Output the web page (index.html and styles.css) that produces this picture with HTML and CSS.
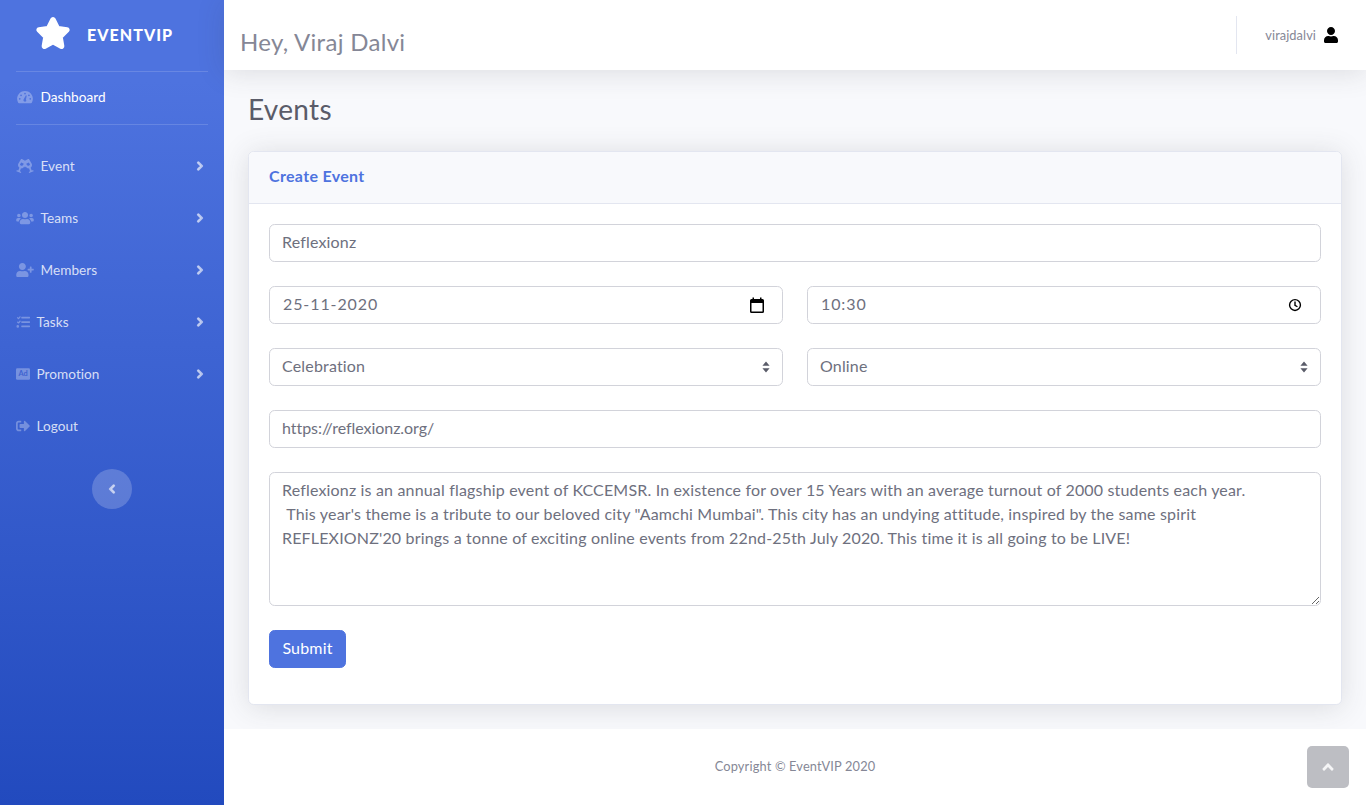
FILE: index.html
```html
<!DOCTYPE html>
<html lang="en">
<head>
<meta charset="utf-8">
<title>Create Event - EventVIP</title>
<link rel="stylesheet" href="styles.css">
</head>
<body>
<aside class="sidebar">
  <a class="brand" href="#">
    <svg class="brand-star" viewBox="0 0 576 512"><path d="M259.3 17.8L194 150.2 47.9 171.5c-26.2 3.8-36.7 36.1-17.7 54.6l105.7 103-25 145.5c-4.5 26.3 23.2 46 46.4 33.7L288 439.6l130.7 68.7c23.2 12.2 50.9-7.4 46.4-33.7l-25-145.5 105.7-103c19-18.5 8.5-50.8-17.7-54.6L382 150.2 316.7 17.8c-11.7-23.6-45.6-23.9-57.4 0z"/></svg>
    <span class="brand-text">EVENTVIP</span>
  </a>
  <hr class="side-rule">
  <a class="nav-item nav-active" href="#">
    <svg class="nav-icon" viewBox="0 0 576 512"><path fill-rule="evenodd" d="M288 32C129 32 0 161 0 320c0 53 14 102 39 144 6 10 16 16 28 16h442c12 0 22-6 28-16 25-42 39-91 39-144C576 161 447 32 288 32zm0 64a32 32 0 1 1 0 64 32 32 0 0 1 0-64zM96 352a32 32 0 1 1 0-64 32 32 0 0 1 0 64zm48-128a32 32 0 1 1 0-64 32 32 0 0 1 0 64zm186 190a64 64 0 0 1-84 0c-18-17-22-44-10-65L316 205c5-8 15-11 23-7s12 13 9 22l-25 124c14 20 18 50 7 70zm102-190a32 32 0 1 1 0-64 32 32 0 0 1 0 64zm48 128a32 32 0 1 1 0-64 32 32 0 0 1 0 64z"/></svg>
    <span>Dashboard</span>
  </a>
  <hr class="side-rule side-rule-gap">
  <a class="nav-item" href="#">
    <svg class="nav-icon" viewBox="0 0 640 512"><path fill-rule="evenodd" d="M639.4 433.6c-8.4-20.4-31.8-30.1-52.2-21.6l-22.1 9.2-38.7-101.9c47.9-35 64.8-100.3 34.5-152.8L474.3 16c-8.8-15.3-28.4-20.5-43.7-11.7L320 68.1 209.4 4.3C194.1-4.5 174.5.7 165.7 16L79.6 166.5c-30.3 52.5-13.4 117.8 34.5 152.8L75.4 421.2l-22.1-9.2c-20.4-8.5-43.8 1.2-52.2 21.6-1.7 4.1.2 8.8 4.3 10.5l162.3 67.4c4.1 1.7 8.7-.2 10.4-4.3 8.4-20.4-1.2-43.8-21.6-52.3l-22.1-9.2L173.3 342c4.2.5 8.5 1.2 12.7 1.2 45.2 0 85.2-28 104.9-72.4 7.2 16.4 17.5 30.3 29.1 42.3 11.6-12 21.9-25.9 29.1-42.3 19.7 44.4 59.7 72.4 104.9 72.4 4.2 0 8.5-.7 12.7-1.2l39 102.6-22.1 9.2c-20.4 8.5-30 31.9-21.6 52.3 1.7 4.1 6.4 6 10.4 4.3L634.9 444c4.1-1.7 6-6.4 4.5-10.4zM138 200l43.5-76 94 54-25 44c-13 24-35 30-60 24-25-6-55-20-52.5-46zM502 200l-43.5-76-94 54 25 44c13 24 35 30 60 24 25-6 55-20 52.5-46z"/></svg>
    <span>Event</span>
    <svg class="nav-chevron" viewBox="0 0 320 512"><path d="M285.476 272.971L91.132 467.314c-9.373 9.373-24.569 9.373-33.941 0l-22.667-22.667c-9.357-9.357-9.375-24.522-.04-33.901L188.505 256 34.484 101.255c-9.335-9.379-9.317-24.544.04-33.901l22.667-22.667c9.373-9.373 24.569-9.373 33.941 0L285.475 239.03c9.373 9.372 9.373 24.568.001 33.941z"/></svg>
  </a>
  <a class="nav-item" href="#">
    <svg class="nav-icon" viewBox="0 0 640 512"><path d="M96 224c35.3 0 64-28.7 64-64s-28.7-64-64-64-64 28.7-64 64 28.7 64 64 64zm448 0c35.3 0 64-28.7 64-64s-28.7-64-64-64-64 28.7-64 64 28.7 64 64 64zm32 32h-64c-17.6 0-33.5 7.1-45.1 18.6 40.3 22.1 68.9 62 75.1 109.4h66c17.7 0 32-14.3 32-32v-32c0-35.3-28.7-64-64-64zm-256 0c61.9 0 112-50.1 112-112S381.9 32 320 32 208 82.1 208 144s50.1 112 112 112zm76.8 32h-8.3c-20.8 10-43.9 16-68.5 16s-47.6-6-68.5-16h-8.3C179.6 288 128 339.6 128 403.2V432c0 26.5 21.5 48 48 48h288c26.5 0 48-21.5 48-48v-28.8c0-63.6-51.6-115.2-115.2-115.2zm-223.7-13.4C161.5 263.1 145.6 256 128 256H64c-35.3 0-64 28.7-64 64v32c0 17.7 14.3 32 32 32h65.9c6.3-47.4 34.9-87.3 75.2-109.4z"/></svg>
    <span>Teams</span>
    <svg class="nav-chevron" viewBox="0 0 320 512"><path d="M285.476 272.971L91.132 467.314c-9.373 9.373-24.569 9.373-33.941 0l-22.667-22.667c-9.357-9.357-9.375-24.522-.04-33.901L188.505 256 34.484 101.255c-9.335-9.379-9.317-24.544.04-33.901l22.667-22.667c9.373-9.373 24.569-9.373 33.941 0L285.475 239.03c9.373 9.372 9.373 24.568.001 33.941z"/></svg>
  </a>
  <a class="nav-item" href="#">
    <svg class="nav-icon" viewBox="0 0 640 512"><path d="M624 208h-64v-64c0-8.8-7.2-16-16-16h-32c-8.8 0-16 7.2-16 16v64h-64c-8.8 0-16 7.2-16 16v32c0 8.8 7.2 16 16 16h64v64c0 8.8 7.2 16 16 16h32c8.8 0 16-7.2 16-16v-64h64c8.8 0 16-7.2 16-16v-32c0-8.8-7.2-16-16-16zm-400 48c70.7 0 128-57.3 128-128S294.7 0 224 0 96 57.3 96 128s57.3 128 128 128zm89.6 32h-16.7c-22.2 10.2-46.9 16-72.9 16s-50.6-5.8-72.9-16h-16.7C60.2 288 0 348.2 0 422.4V464c0 26.5 21.5 48 48 48h352c26.5 0 48-21.5 48-48v-41.6c0-74.2-60.2-134.4-134.4-134.4z"/></svg>
    <span>Members</span>
    <svg class="nav-chevron" viewBox="0 0 320 512"><path d="M285.476 272.971L91.132 467.314c-9.373 9.373-24.569 9.373-33.941 0l-22.667-22.667c-9.357-9.357-9.375-24.522-.04-33.901L188.505 256 34.484 101.255c-9.335-9.379-9.317-24.544.04-33.901l22.667-22.667c9.373-9.373 24.569-9.373 33.941 0L285.475 239.03c9.373 9.372 9.373 24.568.001 33.941z"/></svg>
  </a>
  <a class="nav-item" href="#">
    <svg class="nav-icon nav-icon-square" viewBox="0 0 512 512"><path d="M139 44l-48 54-20-20c-5-5-12-5-17 0l-16 16c-5 5-5 12 0 17l44 44c5 5 13 5 18 0l16-16 56-62c4-5 4-13-1-17l-16-15c-5-4-12-4-16-1zm0 159l-48 54-20-20c-5-5-12-5-17 0l-16 16c-5 5-5 12 0 17l44 44c5 5 13 5 18 0l16-16 56-62c4-5 4-13-1-17l-16-15c-5-4-12-4-16-1zM64 368a48 48 0 1 0 0 96 48 48 0 0 0 0-96zm432 16H208c-9 0-16 7-16 16v32c0 9 7 16 16 16h288c9 0 16-7 16-16v-32c0-9-7-16-16-16zm0-320H208c-9 0-16 7-16 16v32c0 9 7 16 16 16h288c9 0 16-7 16-16V80c0-9-7-16-16-16zm0 160H208c-9 0-16 7-16 16v32c0 9 7 16 16 16h288c9 0 16-7 16-16v-32c0-9-7-16-16-16z"/></svg>
    <span>Tasks</span>
    <svg class="nav-chevron" viewBox="0 0 320 512"><path d="M285.476 272.971L91.132 467.314c-9.373 9.373-24.569 9.373-33.941 0l-22.667-22.667c-9.357-9.357-9.375-24.522-.04-33.901L188.505 256 34.484 101.255c-9.335-9.379-9.317-24.544.04-33.901l22.667-22.667c9.373-9.373 24.569-9.373 33.941 0L285.475 239.03c9.373 9.372 9.373 24.568.001 33.941z"/></svg>
  </a>
  <a class="nav-item" href="#">
    <svg class="nav-icon nav-icon-square" viewBox="0 0 512 512"><rect x="0" y="48" width="512" height="416" rx="48"/><text class="ad-mark" x="256" y="338" text-anchor="middle">Ad</text></svg>
    <span>Promotion</span>
    <svg class="nav-chevron" viewBox="0 0 320 512"><path d="M285.476 272.971L91.132 467.314c-9.373 9.373-24.569 9.373-33.941 0l-22.667-22.667c-9.357-9.357-9.375-24.522-.04-33.901L188.505 256 34.484 101.255c-9.335-9.379-9.317-24.544.04-33.901l22.667-22.667c9.373-9.373 24.569-9.373 33.941 0L285.475 239.03c9.373 9.372 9.373 24.568.001 33.941z"/></svg>
  </a>
  <a class="nav-item" href="#">
    <svg class="nav-icon nav-icon-square" viewBox="0 0 512 512"><path d="M497 273L329 441c-15 15-41 4.5-41-17v-96H152c-13.3 0-24-10.7-24-24v-96c0-13.3 10.7-24 24-24h136V88c0-21.4 25.9-32 41-17l168 168c9.3 9.4 9.3 24.6 0 34zM192 436v-40c0-6.6-5.4-12-12-12H96c-17.7 0-32-14.3-32-32V160c0-17.7 14.3-32 32-32h84c6.6 0 12-5.4 12-12V76c0-6.6-5.4-12-12-12H96c-53 0-96 43-96 96v192c0 53 43 96 96 96h84c6.6 0 12-5.4 12-12z"/></svg>
    <span>Logout</span>
  </a>
  <button class="side-toggle" type="button" aria-label="Collapse sidebar">
    <svg viewBox="0 0 320 512"><path d="M34.52 239.03L228.87 44.69c9.37-9.37 24.57-9.37 33.94 0l22.67 22.67c9.36 9.36 9.37 24.52.04 33.9L131.49 256l154.02 154.75c9.34 9.38 9.32 24.54-.04 33.9l-22.67 22.67c-9.37 9.37-24.57 9.37-33.94 0L34.52 272.97c-9.37-9.37-9.37-24.57 0-33.94z"/></svg>
  </button>
</aside>

<div class="main">
  <header class="topbar">
    <h2 class="greeting">Hey, Viraj Dalvi</h2>
    <div class="user">
      <span class="user-name">virajdalvi</span>
      <svg class="user-icon" viewBox="0 0 448 512"><path d="M224 256c70.7 0 128-57.3 128-128S294.7 0 224 0 96 57.3 96 128s57.3 128 128 128zm89.6 32h-16.7c-22.2 10.2-46.9 16-72.9 16s-50.6-5.8-72.9-16h-16.7C60.2 288 0 348.2 0 422.4V464c0 26.5 21.5 48 48 48h352c26.5 0 48-21.5 48-48v-41.6c0-74.2-60.2-134.4-134.4-134.4z"/></svg>
    </div>
  </header>

  <main class="content">
    <h1 class="page-title">Events</h1>
    <section class="card">
      <h3 class="card-header"><span class="card-title">Create Event</span></h3>
      <form class="card-body">
        <input class="field" type="text" value="Reflexionz">
        <div class="field-pair">
          <div class="field picker">
            <input class="picker-input" type="text" value="25-11-2020">
            <svg class="picker-icon" viewBox="0 0 16 16"><path d="M3.5 0.5h1.5v1.5h6V0.5h1.5v1.5h1a1.5 1.5 0 0 1 1.5 1.5v11a1.5 1.5 0 0 1-1.5 1.5H2.5A1.5 1.5 0 0 1 1 14.5v-11A1.5 1.5 0 0 1 2.5 2h1V0.5zM2.5 6v8.5h11V6h-11z" fill-rule="evenodd"/></svg>
          </div>
          <div class="field picker">
            <input class="picker-input" type="text" value="10:30">
            <svg class="picker-icon picker-clock" viewBox="0 0 16 16"><circle cx="8" cy="8" r="6.2"/><path d="M8 4v4.3l2.8 1.7"/></svg>
          </div>
        </div>
        <div class="field-pair">
          <select class="field select"><option>Celebration</option></select>
          <select class="field select"><option>Online</option></select>
        </div>
        <input class="field field-url" type="text" value="https://reflexionz.org/">
        <textarea class="field area" rows="5">Reflexionz is an annual flagship event of KCCEMSR. In existence for over 15 Years with an average turnout of 2000 students each year.
 This year's theme is a tribute to our beloved city "Aamchi Mumbai". This city has an undying attitude, inspired by the same spirit
REFLEXIONZ'20 brings a tonne of exciting online events from 22nd-25th July 2020. This time it is all going to be LIVE!</textarea>
        <button class="submit" type="button">Submit</button>
      </form>
    </section>
  </main>

  <footer class="footer">Copyright © EventVIP 2020</footer>
</div>

<a class="to-top" href="#" aria-label="Back to top">
  <svg viewBox="0 0 320 512"><path d="M177 159.7l136 136c9.4 9.4 9.4 24.6 0 33.9l-22.6 22.6c-9.4 9.4-24.6 9.4-33.9 0L160 255.9l-96.4 96.4c-9.4 9.4-24.6 9.4-33.9 0L7 329.7c-9.4-9.4-9.4-24.6 0-33.9l136-136c9.4-9.5 24.6-9.5 34-.1z"/></svg>
</a>
</body>
</html>
```

FILE: styles.css
```css
* { box-sizing: border-box; }

html, body { height: 100%; }

body {
  margin: 0;
  display: flex;
  min-height: 805px;
  background: #f8f9fc;
  color: #858796;
  font-family: "Lato", "Noto Sans", "Liberation Sans", sans-serif;
  font-size: 16px;
  overflow: hidden;
}

a { text-decoration: none; }

/* Sidebar */
.sidebar {
  width: 224px;
  flex: none;
  display: flex;
  flex-direction: column;
  background: linear-gradient(180deg, #4e73df 10%, #224abe 100%);
}

.brand {
  height: 71px;
  display: flex;
  align-items: center;
  padding: 0 0 3px 36px;
  gap: 17px;
  color: #fff;
}

.brand-star {
  width: 34px;
  height: 32px;
  margin-bottom: 2px;
  overflow: visible;
  fill: #fff;
  stroke: #fff;
  stroke-width: 30;
  stroke-linejoin: round;
}

.brand-text { font-size: 16px; font-weight: 900; letter-spacing: 1.05px; }

.side-rule { height: 1px; margin: 0 16px; border: 0; background: rgba(255, 255, 255, 0.15); flex: none; }

.side-rule-gap { margin-bottom: 15px; }

.nav-item {
  height: 52px;
  flex: none;
  display: flex;
  align-items: center;
  gap: 6.5px;
  padding: 0 20px 0 16px;
  color: rgba(255, 255, 255, 0.8);
  font-size: 13.6px;
  letter-spacing: 0.04px;
}

.nav-active { color: #fff; padding-bottom: 2px; }

.nav-icon { width: 18px; height: 14px; flex: none; fill: rgba(255, 255, 255, 0.3); }

.nav-icon-square { width: 14px; }

.ad-mark { font-family: "Lato", sans-serif; font-weight: 700; font-size: 270px; fill: #3f63d0; }

.nav-chevron {
  width: 8px;
  height: 10px;
  margin-left: auto;
  overflow: visible;
  fill: rgba(255, 255, 255, 0.5);
  stroke: rgba(255, 255, 255, 0.5);
  stroke-width: 60;
  stroke-linejoin: round;
}

.side-toggle {
  width: 40px;
  height: 40px;
  margin: 17px auto 0;
  padding: 0;
  border: 0;
  border-radius: 50%;
  background: rgba(255, 255, 255, 0.2);
  display: flex;
  align-items: center;
  justify-content: center;
}

.side-toggle svg {
  width: 8px;
  height: 10px;
  overflow: visible;
  fill: rgba(255, 255, 255, 0.5);
  stroke: rgba(255, 255, 255, 0.5);
  stroke-width: 60;
  stroke-linejoin: round;
}

/* Main column */
.main {
  flex: 1;
  min-width: 0;
  display: flex;
  flex-direction: column;
}

.topbar {
  height: 70px;
  flex: none;
  display: flex;
  align-items: center;
  justify-content: space-between;
  padding: 0 28px 0 16px;
  background: #fff;
  box-shadow: 0 2.4px 28px rgba(58, 59, 69, 0.15);
}

.greeting { margin: 12px 0 0; font-size: 24px; font-weight: 400; letter-spacing: 0.3px; color: #858796; }

.user {
  height: 38px;
  display: flex;
  align-items: center;
  gap: 8px;
  padding-left: 28px;
  border-left: 1px solid #e3e6f0;
}

.user-name { font-size: 12.8px; letter-spacing: 0.08px; color: #858796; }

.user-icon { width: 14px; height: 16px; fill: #000; }

.content { flex: 1; padding: 22px 24px 24px; }

.page-title { margin: 0 0 25px; font-size: 28px; line-height: 34px; font-weight: 400; letter-spacing: 0.33px; color: #5a5c69; }

.card {
  background: #fff;
  border: 1px solid #e3e6f0;
  border-radius: 5.6px;
  box-shadow: 0 2.4px 28px rgba(58, 59, 69, 0.15);
}

.card-header {
  height: 52px;
  margin: 0;
  padding: 0 20px 5px;
  display: flex;
  align-items: center;
  background: #f8f9fc;
  border-bottom: 1px solid #e3e6f0;
  border-radius: 5px 5px 0 0;
  color: #4e73df;
  font-size: 16px;
  font-weight: 700;
  letter-spacing: 0.33px;
}

.card-body { padding: 20px; display: flex; flex-direction: column; gap: 24px; align-items: stretch; }

.field {
  height: 38px;
  width: 100%;
  padding: 4px 12px 8px;
  border: 1px solid #d2d3da;
  border-radius: 5.6px;
  background-color: #fff;
  color: #6e707e;
  font: inherit;
  line-height: 24px;
  letter-spacing: 0.17px;
}

.field-url { letter-spacing: -0.05px; }

.field-pair { display: grid; grid-template-columns: 1fr 1fr; gap: 24px; }

.picker { display: flex; align-items: center; padding: 0 17px 0 13px; }

.picker-input {
  flex: 1;
  min-width: 0;
  margin-bottom: 2px;
  padding: 0;
  border: 0;
  outline: 0;
  background: none;
  color: #6e707e;
  font: inherit;
  letter-spacing: 0.9px;
}

.picker-icon { width: 16px; height: 16px; fill: #000; flex: none; }

.picker-clock { width: 14px; height: 14px; margin-right: 1px; fill: none; stroke: #000; stroke-width: 1.6; }

.select {
  appearance: none;
  -webkit-appearance: none;
  padding: 5px 12px 7px;
  background-image: url("data:image/svg+xml,%3csvg xmlns='http://www.w3.org/2000/svg' width='8' height='12' viewBox='0 0 8 12'%3e%3cpath fill='%235a5c69' d='M4 0.5L7.6 4.8H0.4zM4 11.5L0.4 7.2H7.6z'/%3e%3c/svg%3e");
  background-repeat: no-repeat;
  background-position: right 12px center;
  background-size: 8px 12px;
}

.area { height: 134px; padding: 5px 12px 7px; resize: vertical; display: block; }

.submit {
  align-self: flex-start;
  width: 77px;
  height: 38px;
  margin-bottom: 16px;
  padding: 0 0 4px;
  border: 1px solid #4e73df;
  border-radius: 5.6px;
  background: #4e73df;
  color: #fff;
  font: inherit;
  letter-spacing: 0.17px;
}

.footer {
  height: 76px;
  flex: none;
  display: flex;
  align-items: center;
  justify-content: center;
  padding-bottom: 2px;
  background: #fff;
  color: #858796;
  font-size: 12.8px;
  letter-spacing: 0.16px;
}

.to-top {
  position: fixed;
  right: 17px;
  bottom: 17px;
  width: 42px;
  height: 42px;
  display: flex;
  align-items: center;
  justify-content: center;
  border-radius: 5px;
  background: rgba(90, 92, 105, 0.4);
}

.to-top svg { width: 12px; height: 18px; fill: #fff; opacity: 0.85; }
```
